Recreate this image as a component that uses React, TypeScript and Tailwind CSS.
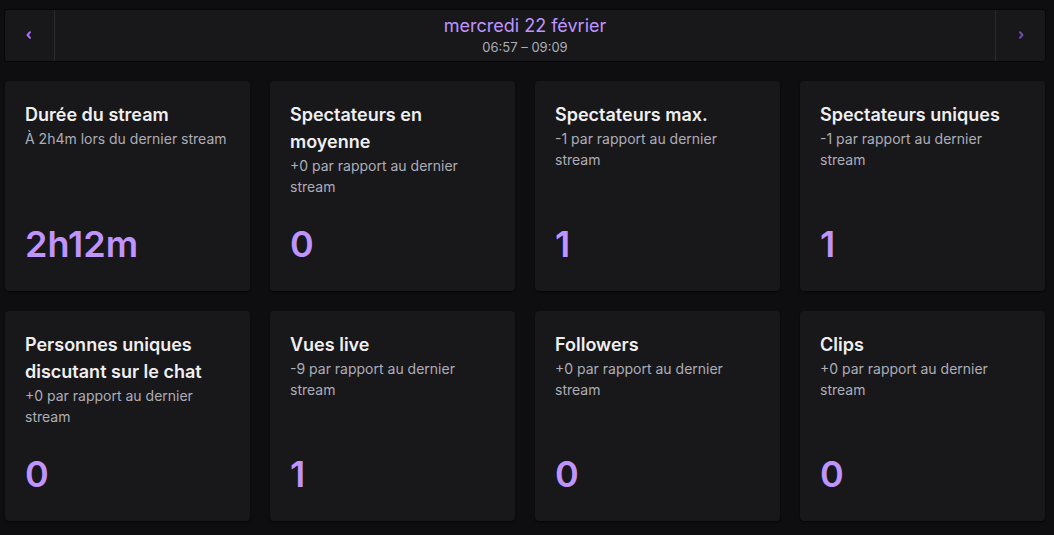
import React from "react";

type Stat = { title: string; sub: string; value: string };

const stats: Stat[] = [
  { title: "Durée du stream", sub: "À 2h4m lors du dernier stream", value: "2h12m" },
  { title: "Spectateurs en moyenne", sub: "+0 par rapport au dernier stream", value: "0" },
  { title: "Spectateurs max.", sub: "-1 par rapport au dernier stream", value: "1" },
  { title: "Spectateurs uniques", sub: "-1 par rapport au dernier stream", value: "1" },
  { title: "Personnes uniques discutant sur le chat", sub: "+0 par rapport au dernier stream", value: "0" },
  { title: "Vues live", sub: "-9 par rapport au dernier stream", value: "1" },
  { title: "Followers", sub: "+0 par rapport au dernier stream", value: "0" },
  { title: "Clips", sub: "+0 par rapport au dernier stream", value: "0" },
];

function Card({ s }: { s: Stat }) {
  return (
    <div className="h-[210px] rounded-[4px] bg-[#18181b] shadow-[0_1px_2px_rgba(0,0,0,0.6)] p-5 flex flex-col justify-between">
      <div>
        <div className="text-[18px] leading-[27px] font-semibold text-[#efeff1]">{s.title}</div>
        <div className="text-[14px] leading-[21px] text-[#adadb8]">{s.sub}</div>
      </div>
      <div className="text-[36px] leading-[54px] font-semibold text-[#bf94ff]">{s.value}</div>
    </div>
  );
}

export default function App() {
  return (
    <div
      className="min-h-[535px] w-full bg-[#0e0e10] pt-[10px] pl-[5px]"
      style={{ fontFamily: "Inter, 'Noto Sans', sans-serif" }}
    >
      <div className="w-[1040px]">
        <div className="h-[51px] flex bg-[#18181b] rounded-[2px] shadow-[0_0_0_1px_rgba(0,0,0,0.5)]">
          <div className="w-[50px] flex items-center justify-center border-r border-[#2a2a2f]">
            <svg width="6" height="8" viewBox="0 0 6 8" className="-ml-[2px] -mt-[2px]">
              <polyline points="4,1.2 1.6,4 4,6.8" fill="none" stroke="#a970ff" strokeWidth="2" strokeLinecap="round" strokeLinejoin="round" />
            </svg>
          </div>
          <div className="flex-1 flex flex-col items-center justify-center -mt-[1px]">
            <div className="text-[18px] leading-[24px] text-[#bf94ff]">mercredi 22 février</div>
            <div className="text-[13px] leading-[18px] text-[#adadb8]">06:57 – 09:09</div>
          </div>
          <div className="w-[50px] flex items-center justify-center border-l border-[#2a2a2f]">
            <svg width="6" height="8" viewBox="0 0 6 8" className="-mt-[2px]">
              <polyline points="2,1.2 4.4,4 2,6.8" fill="none" stroke="#6c4ea8" strokeWidth="2" strokeLinecap="round" strokeLinejoin="round" />
            </svg>
          </div>
        </div>
        <div className="mt-5 grid grid-cols-4 gap-5">
          {stats.map((s) => (
            <Card key={s.title} s={s} />
          ))}
        </div>
      </div>
    </div>
  );
}
